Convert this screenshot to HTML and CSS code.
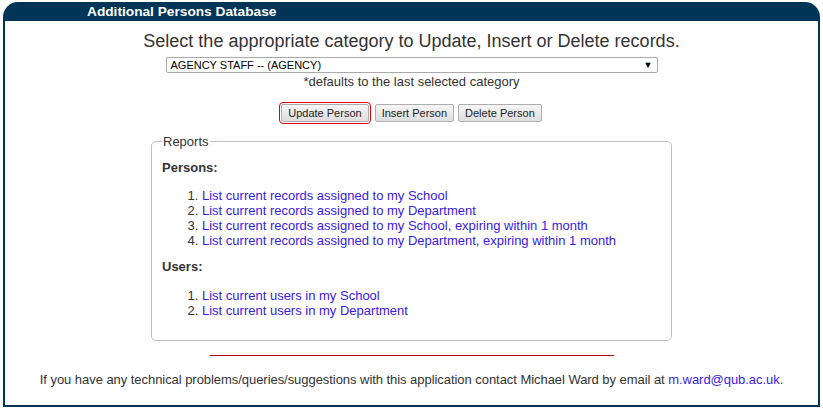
FILE: index.html
```html
<!DOCTYPE html>
<html>
<head>
<meta charset="utf-8">
<link rel="stylesheet" href="styles.css">
</head>
<body>
<div class="frame">
  <div class="frame-head">Additional Persons Database</div>
  <div class="frame-body">
    <h1 class="title">Select the appropriate category to Update, Insert or Delete records.</h1>
    <div class="select">
      <span class="select-text">AGENCY STAFF -- (AGENCY)</span>
      <span class="select-arrow">&#9660;</span>
    </div>
    <div class="note">*defaults to the last selected category</div>
    <div class="buttons">
      <button class="btn btn-focus">Update Person</button>
      <button class="btn">Insert Person</button>
      <button class="btn">Delete Person</button>
    </div>
    <fieldset class="reports">
      <legend class="reports-legend">Reports</legend>
      <div class="group-title">Persons:</div>
      <ol class="list list-first">
        <li><a href="#">List current records assigned to my School</a></li>
        <li><a href="#">List current records assigned to my Department</a></li>
        <li><a href="#">List current records assigned to my School, expiring within 1 month</a></li>
        <li><a href="#">List current records assigned to my Department, expiring within 1 month</a></li>
      </ol>
      <div class="group-title">Users:</div>
      <ol class="list list-last">
        <li><a href="#">List current users in my School</a></li>
        <li><a href="#">List current users in my Department</a></li>
      </ol>
    </fieldset>
    <div class="rule"></div>
    <p class="footer">If you have any technical problems/queries/suggestions with this application contact Michael Ward by email at <a href="#">m.ward@qub.ac.uk</a>.</p>
  </div>
</div>
</body>
</html>
```

FILE: styles.css
```css
html, body {
  margin: 0;
  padding: 0;
  background: #ffffff;
}
body {
  padding: 2px 0 0 3px;
  font-family: "Liberation Sans", Arial, sans-serif;
  color: #333333;
}
.frame {
  width: 817px;
}
.frame-head {
  height: 19px;
  line-height: 19px;
  background: #003558;
  color: #ffffff;
  font-weight: bold;
  font-size: 13.7px;
  padding-left: 84px;
  border-radius: 15px 15px 0 0;
}
.frame-body {
  box-sizing: border-box;
  height: 386px;
  border: 2px solid #003558;
  border-top: none;
  display: flex;
  flex-direction: column;
  align-items: center;
}
.title {
  margin: 10px 0 0 0;
  font-size: 18px;
  line-height: 21px;
  font-weight: normal;
  color: #333333;
}
.select {
  box-sizing: border-box;
  margin-top: 5px;
  width: 492px;
  height: 16px;
  border: 1px solid #a9a9a9;
  border-radius: 2px;
  display: flex;
  align-items: center;
  justify-content: space-between;
  padding: 0 4px 0 4px;
  font-size: 11px;
  color: #000;
}
.select-arrow {
  font-size: 9px;
}
.note {
  margin-top: 1px;
  font-size: 13px;
  line-height: 15px;
  color: #333333;
}
.buttons {
  margin-top: 15px;
  display: flex;
  gap: 4px;
}
.btn {
  box-sizing: border-box;
  height: 18px;
  padding: 0 6px;
  font-family: "Liberation Sans", Arial, sans-serif;
  font-size: 11px;
  color: #222;
  background: linear-gradient(#f6f6f6, #dedede);
  border: 1px solid #adadad;
  border-radius: 2px;
}
.btn-focus {
  outline: 1px solid #e00000;
  outline-offset: 1px;
  margin-right: 2px;
}
.reports {
  box-sizing: border-box;
  margin: 12px 0 0 0;
  width: 521px;
  height: 207px;
  border: 1px solid #c0c0c0;
  border-radius: 5px;
  padding: 11px 10px 0 10px;
  font-size: 13px;
}
.reports-legend {
  padding: 0 1px;
  font-size: 13px;
  color: #333333;
  line-height: 15px;
}
.group-title {
  font-weight: bold;
  line-height: 15px;
}
.list {
  margin: 0;
  padding-left: 40px;
  line-height: 15px;
}
.list-first {
  margin: 13px 0 11px 0;
}
.list-last {
  margin: 14px 0 0 0;
}
.list a, .footer a {
  color: #3a1ae6;
  text-decoration: none;
}
.rule {
  margin-top: 14px;
  width: 404px;
  height: 0;
  border-top: 1px solid #b40000;
}
.footer {
  margin: 16px 0 0 0;
  font-size: 13px;
  line-height: 15px;
  letter-spacing: -0.05px;
  color: #333333;
}
```
